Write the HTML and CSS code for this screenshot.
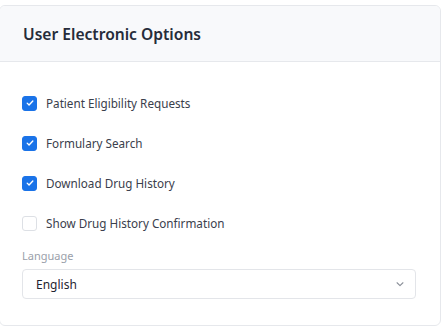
FILE: index.html
```html
<!DOCTYPE html>
<html lang="en">
<head>
  <meta charset="UTF-8">
  <title>User Electronic Options</title>
  <link rel="stylesheet" href="styles.css">
</head>
<body>

  <div class="tarjeta">
    <div class="cabecera">User Electronic Options</div>

    <div class="cuerpo">
      <label class="opcion">
        <span class="caja marcada">
          <svg viewBox="0 0 16 16" width="10" height="10"><path d="M3.5 8.2l3 3 6-6.4" fill="none" stroke="#fff" stroke-width="2.2" stroke-linecap="round" stroke-linejoin="round"/></svg>
        </span>
        Patient Eligibility Requests
      </label>
      <label class="opcion">
        <span class="caja marcada">
          <svg viewBox="0 0 16 16" width="10" height="10"><path d="M3.5 8.2l3 3 6-6.4" fill="none" stroke="#fff" stroke-width="2.2" stroke-linecap="round" stroke-linejoin="round"/></svg>
        </span>
        Formulary Search
      </label>
      <label class="opcion">
        <span class="caja marcada">
          <svg viewBox="0 0 16 16" width="10" height="10"><path d="M3.5 8.2l3 3 6-6.4" fill="none" stroke="#fff" stroke-width="2.2" stroke-linecap="round" stroke-linejoin="round"/></svg>
        </span>
        Download Drug History
      </label>
      <label class="opcion">
        <span class="caja"></span>
        Show Drug History Confirmation
      </label>

      <div class="campo">
        <div class="etiqueta">Language</div>
        <div class="selector">
          <span>English</span>
          <svg viewBox="0 0 12 12" width="10" height="10"><path d="M2.5 4.5l3.5 3.5 3.5-3.5" fill="none" stroke="#8a8f98" stroke-width="1.3" stroke-linecap="round" stroke-linejoin="round"/></svg>
        </div>
      </div>
    </div>
  </div>

</body>
</html>
```

FILE: styles.css
```css
body {
  font-family: "Noto Sans", "Open Sans", sans-serif;
  background-color: #fff;
  color: #333a47;
  margin: 0;
}
.tarjeta {
  margin: 5px 0 0 -1px;
  width: 440px;
  height: 319px;
  border: 1px solid #e6e8ec;
  border-radius: 6px;
  overflow: hidden;
}
.cabecera {
  height: 55px;
  padding-left: 23px;
  display: flex;
  align-items: center;
  background-color: #f8f9fb;
  border-bottom: 1px solid #e6e8ec;
  font-size: 15.6px;
  font-weight: 600;
  color: #262c3a;
}
.cuerpo {
  padding: 21px 24px 0 22px;
}
.opcion {
  display: flex;
  align-items: center;
  gap: 9px;
  height: 40px;
  font-size: 11.7px;
  color: #3a404c;
}
.caja {
  width: 15px;
  height: 15px;
  box-sizing: border-box;
  border: 1px solid #dde0e5;
  border-radius: 3px;
  display: flex;
  justify-content: center;
  align-items: center;
}
.caja.marcada {
  background-color: #1a73e8;
  border-color: #1a73e8;
}
.campo {
  margin-top: 5px;
}
.etiqueta {
  font-size: 11px;
  color: #9aa0aa;
  margin-bottom: 6px;
}
.selector {
  width: 394px;
  height: 30px;
  box-sizing: border-box;
  border: 1px solid #e3e5e9;
  border-radius: 4px;
  padding: 0 10px 0 13px;
  display: flex;
  justify-content: space-between;
  align-items: center;
  font-size: 12px;
  color: #1f2430;
}
```
